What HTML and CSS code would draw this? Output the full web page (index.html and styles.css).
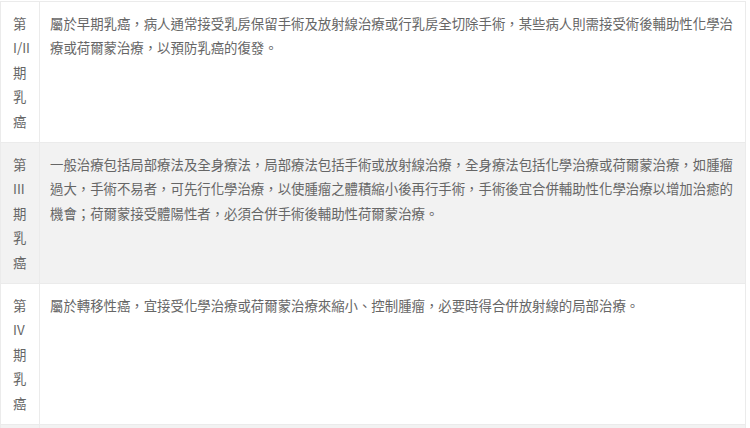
FILE: index.html
```html
<!DOCTYPE html>
<html lang="zh-TW">
<head>
<meta charset="utf-8">
<title>乳癌分期治療</title>
<link rel="stylesheet" href="styles.css">
</head>
<body>
<table class="stage-table">
  <tbody>
    <tr class="row">
      <td class="stage">第<br>I/II<br>期<br>乳<br>癌</td>
      <td class="desc">屬於早期乳癌，病人通常接受乳房保留手術及放射線治療或行乳房全切除手術，某些病人則需接受術後輔助性化學治療或荷爾蒙治療，以預防乳癌的復發。</td>
    </tr>
    <tr class="row alt">
      <td class="stage">第<br>III<br>期<br>乳<br>癌</td>
      <td class="desc">一般治療包括局部療法及全身療法，局部療法包括手術或放射線治療，全身療法包括化學治療或荷爾蒙治療，如腫瘤過大，手術不易者，可先行化學治療，以使腫瘤之體積縮小後再行手術，手術後宜合併輔助性化學治療以增加治癒的機會；荷爾蒙接受體陽性者，必須合併手術後輔助性荷爾蒙治療。</td>
    </tr>
    <tr class="row">
      <td class="stage">第<br>IV<br>期<br>乳<br>癌</td>
      <td class="desc">屬於轉移性癌，宜接受化學治療或荷爾蒙治療來縮小、控制腫瘤，必要時得合併放射線的局部治療。</td>
    </tr>
    <tr class="row alt">
      <td class="stage"></td>
      <td class="desc"></td>
    </tr>
  </tbody>
</table>
</body>
</html>
```
FILE: styles.css
```css
html, body {
  margin: 0;
  padding: 0;
  background: #ffffff;
}

body {
  font-family: "Noto Sans CJK TC", "Liberation Sans", sans-serif;
  font-size: 13.4px;
  line-height: 24.4px;
  color: #666666;
  overflow: hidden;
}

.stage-table {
  width: 746px;
  margin-top: 1px;
  border-collapse: collapse;
  table-layout: fixed;
}

.stage-table td {
  border: 1px solid #ebebeb;
  vertical-align: top;
  padding: 9px 8px 9px 10px;
}

.stage-table td.stage {
  width: 17px;
  padding-left: 12px;
  padding-right: 9px;
}

.row.alt td {
  background: #f2f2f2;
}
```
